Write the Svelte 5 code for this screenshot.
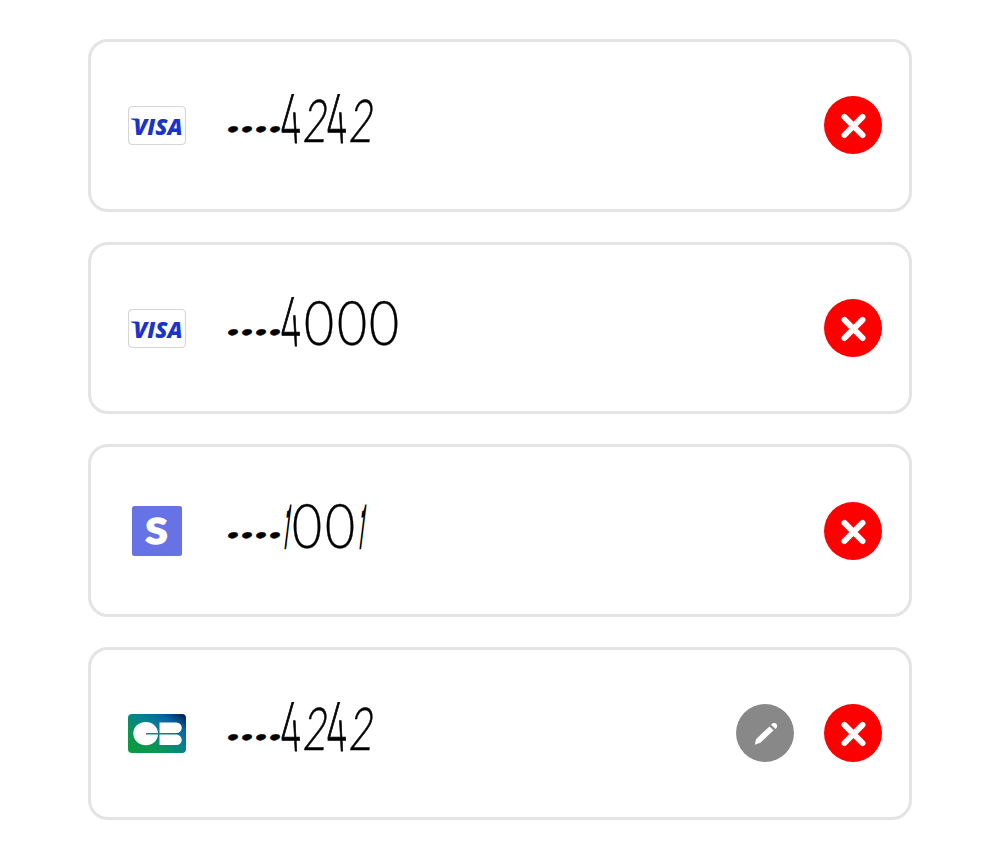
<script>
  const cards = [
    { brand: 'visa', last4: '4242' },
    { brand: 'visa', last4: '4000' },
    { brand: 'stripe', last4: '1001' },
    { brand: 'cb', last4: '4242', editable: true }
  ];
</script>

<main>
  {#each cards as card}
    <article class="card">
      <div class="brand">
        {#if card.brand === 'visa'}
          <svg width="58" height="39" viewBox="0 0 58 39">
            <rect x=".5" y=".5" width="57" height="38" rx="4" fill="#fff" stroke="#d6d6d6" stroke-width="1.2" />
            <path d="M3 12.600H10L11.500 17.500Q8 14 3 13.200Z" fill="#1a34cb" />
            <text x="5.500" y="28.600" textLength="49" lengthAdjust="spacingAndGlyphs" class="visa">VISA</text>
          </svg>
        {:else if card.brand === 'stripe'}
          <svg width="50" height="50" viewBox="0 0 50 50">
            <rect width="50" height="50" rx="2.500" fill="#6772e5" />
            <text x="13.500" y="38" textLength="22" lengthAdjust="spacingAndGlyphs" class="stripe">S</text>
          </svg>
        {:else}
          <svg width="58" height="39" viewBox="0 0 58 39">
            <defs>
              <linearGradient id="cb-base" x1="0" y1="1" x2="1" y2="0">
                <stop offset="0" stop-color="#0b9c3d" />
                <stop offset=".3" stop-color="#0b9553" />
                <stop offset=".58" stop-color="#087f93" />
                <stop offset=".78" stop-color="#0565a0" />
                <stop offset="1" stop-color="#03164d" />
              </linearGradient>
            </defs>
            <rect width="58" height="39" rx="4" fill="url(#cb-base)" />
            <path d="M18 19H30C29.600 12.700 24.600 8 17.700 8C10.600 8 5.300 13 5.300 19.600S10.600 31.300 17.700 31.300C24.600 31.300 29.600 26.900 30 20.600H18Z" fill="#fff" />
            <path d="M31.500 8.500H48.500A5.250 5.250 0 0 1 48.500 19H31.500ZM31.500 20.600H48.500A5.250 5.250 0 0 1 48.500 31.100H31.500Z" fill="#fff" />
          </svg>
        {/if}
      </div>
      <div class="number">
        {#each '••••' as dot}<span class="cell dot"><i>{dot}</i></span>{/each}
        {#each card.last4 as digit}<span class="cell d{digit}"><i>{digit}</i></span>{/each}
      </div>
      <div class="actions">
        {#if card.editable}
          <button class="edit" aria-label="Edit">
            <svg width="58" height="58" viewBox="0 0 58 58" fill="#fff">
              <path d="M18.800 40.800L20 35.200L33.400 22.400L37.600 26.300L24.400 38.700Z" />
              <path d="M35 20.800C36.700 18.600 39.400 18.600 40.500 20C41.600 21.400 41.200 23.700 39.500 25.100Z" />
            </svg>
          </button>
        {/if}
        <button class="remove" aria-label="Remove">
          <svg width="58" height="58" viewBox="0 0 58 58" fill="none" stroke="#fff" stroke-width="6" stroke-linecap="round">
            <path d="M20.500 20.900L38.500 39M38.500 20.900L20.500 39" />
          </svg>
        </button>
      </div>
    </article>
  {/each}
</main>

<style>
  :global(body) { margin: 0; background: #fff; }
  main {
    box-sizing: border-box;
    height: 859px;
    padding: 39px 88px;
    display: flex;
    flex-direction: column;
    gap: 30px;
  }
  .card {
    box-sizing: border-box;
    height: 172.700px;
    flex: none;
    display: flex;
    align-items: center;
    border: 3px solid #e4e4e4;
    border-radius: 20px;
    padding: 0 27px 0 37px;
  }
  .brand { width: 58px; display: flex; justify-content: center; }
  .brand svg, button svg { display: block; }
  .visa { font: italic 800 23px "Open Sans", sans-serif; fill: #1a34cb; }
  .stripe { font: 900 36px Lato, sans-serif; fill: #fff; stroke: #fff; stroke-width: 1.600px; }
  .number {
    margin: 0 0 10px 40px;
    height: 60px;
    display: flex;
    flex: 1;
    font: 200 60px/60px Inter, sans-serif;
    font-feature-settings: "cv01", "cv02";
    color: #000;
  }
  .cell { display: block; height: 60px; }
  .cell i {
    display: block;
    width: max-content;
    font-style: normal;
    transform-origin: 0 51px;
  }
  .dot { width: 13.900px; }
  .dot i { font: 400 30px/60px Lato, sans-serif; transform: translate(-3px, -2.500px) skewX(-16deg) scale(.82, .54); -webkit-text-stroke: .8px #000; }
  .d4 { width: 22.800px; }
  .d4 i { transform: translate(-2px, .5px) skewX(3deg) scale(.62, 1.110); -webkit-text-stroke: 1px #000; }
  .d2 { width: 23.200px; }
  .d2 i { transform: translate(-3px, .5px) skewX(-8deg) scale(.7, .96); -webkit-text-stroke: .6px #000; }
  .d0 { width: 32.500px; }
  .d0 i { transform: translate(-2px, 0) scale(.94, 1); -webkit-text-stroke: .3px #000; }
  .d1 { width: 10.500px; }
  .d1 i { transform: translate(.5px, -1px) skewX(-7deg) scale(.2, .92); -webkit-text-stroke: 5px #000; }
  .actions { display: flex; gap: 30px; }
  button {
    width: 58px;
    height: 58px;
    padding: 0;
    border: 0;
    border-radius: 50%;
  }
  .edit { background: #888; }
  .remove { background: #f00; }
</style>
